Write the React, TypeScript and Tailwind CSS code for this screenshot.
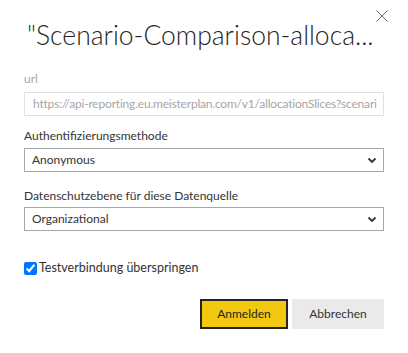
import React from 'react';

const ChevronDown: React.FC = () => (
  <svg width="10" height="10" viewBox="0 0 10 10" className="text-[#333]">
    <path d="M1.5 3.5 L5 7 L8.5 3.5" fill="none" stroke="currentColor" strokeWidth="1.8" />
  </svg>
);

const SelectBox: React.FC<{ value: string }> = ({ value }) => (
  <div className="mt-1 flex h-6 items-center justify-between border border-[#a6a6a6] bg-white pl-[7px] pr-[6px] text-[12px] text-[#333]">
    <span>{value}</span>
    <ChevronDown />
  </div>
);

const App: React.FC = () => {
  return (
    <div
      className="h-[353px] w-[408px] bg-white px-6"
      style={{ fontFamily: 'Lato, "Open Sans", sans-serif' }}
    >
      <div className="relative">
        <button className="absolute right-[-4px] top-[10px] text-[#666]">
          <svg width="12" height="12" viewBox="0 0 12 12">
            <path d="M0.5 0.5 L11.5 11.5 M11.5 0.5 L0.5 11.5" stroke="currentColor" strokeWidth="1" />
          </svg>
        </button>
      </div>

      <h1 className="whitespace-nowrap pl-[3px] pt-[17px] text-[26.5px] font-light leading-9 text-[#252423]">
        "Scenario-Comparison-alloca...
      </h1>

      <div className="mt-[18px] text-[12px] leading-4 text-[#a6a6a6]">url</div>
      <div className="mt-[5px] flex h-6 items-center overflow-hidden whitespace-nowrap border border-[#e1e1e1] pl-[8px] text-[12px] tracking-[-0.2px] text-[#a6a6a6]">
        https://api-reporting.eu.meisterplan.com/v1/allocationSlices?scenari
      </div>

      <div className="mt-3 text-[12px] leading-4 text-[#333]">Authentifizierungsmethode</div>
      <SelectBox value="Anonymous" />

      <div className="mt-4 text-[12px] leading-4 text-[#333]">Datenschutzebene für diese Datenquelle</div>
      <div className="-mt-px">
        <SelectBox value="Organizational" />
      </div>

      <label className="mt-[29px] flex h-4 items-center gap-[2px] text-[12.5px] text-[#333]">
        <input type="checkbox" defaultChecked className="m-0 h-[13px] w-[13px] accent-[#0075ff]" />
        Testverbindung überspringen
      </label>

      <div className="mt-[23px] flex justify-end gap-1">
        <button className="h-[30px] w-[88px] border-2 border-[#252423] bg-[#f2c811] text-[12px] text-[#252423]">
          Anmelden
        </button>
        <button className="h-[30px] w-[92px] bg-[#eaeaea] text-[12px] text-[#333]">
          Abbrechen
        </button>
      </div>
    </div>
  );
};

export default App;
